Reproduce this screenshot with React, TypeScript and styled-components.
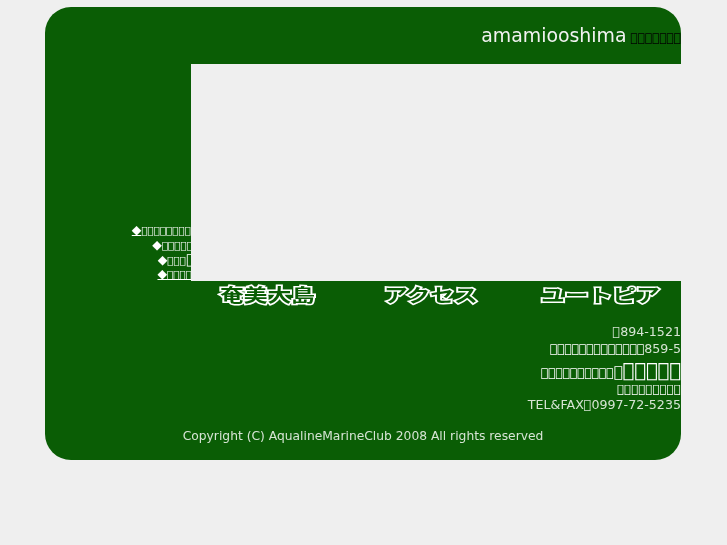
import React from "react";
import styled, { createGlobalStyle } from "styled-components";

const Global = createGlobalStyle`
  html, body { margin: 0; padding: 0; background: #efefef; }
  body { font-family: "DejaVu Sans", sans-serif; height: 545px; overflow: hidden; }
`;
const Card = styled.div`
  margin: 7px 0 0 45px;
  width: 636px;
  height: 453px;
  background: #0a5d05;
  border-radius: 26px;
  overflow: hidden;
  display: flex;
  flex-direction: column;
  filter: blur(0.3px);
`;
const Header = styled.header`
  height: 57px;
  flex: none;
  display: flex;
  justify-content: flex-end;
  align-items: baseline;
  white-space: nowrap;
  padding-top: 17px;
  box-sizing: border-box;
`;
const Title = styled.h1`
  margin: 0;
  font-size: 18.9px;
  font-weight: 400;
  color: #f2f2f2;
`;
const Sub = styled.span`
  font-size: 12px;
  color: #000;
  margin-left: 4px;
`;
const Middle = styled.div`
  display: flex;
  height: 217px;
  flex: none;
`;
const Nav = styled.nav`
  width: 146px;
  flex: none;
  box-sizing: border-box;
  padding-top: 159px;
  overflow: hidden;
  display: flex;
  flex-direction: column;
  align-items: flex-end;
  font-size: 10.3px;
  line-height: 14.8px;
  white-space: nowrap;
`;
const NavLink = styled.a<{ $under?: boolean; $pull: number }>`
  color: #fff;
  text-decoration: ${(p) => (p.$under ? "underline" : "none")};
  margin-right: ${(p) => p.$pull}px;
`;
const Diamond = styled.span`
  font-size: 12.5px;
  line-height: 1;
`;
const NavBig = styled.span`
  font-size: 13.5px;
  line-height: 1;
`;
const Hero = styled.div`
  flex: 1;
  background: #efefef;
`;
const Tabs = styled.div`
  height: 30px;
  flex: none;
  display: grid;
  grid-template-columns: 164px 157px 140px;
  padding-left: 175px;
  font-family: "Noto Sans CJK JP", sans-serif;
`;
const Tab = styled.span`
  display: block;
  font-size: 18px;
  font-weight: 700;
  line-height: 27px;
  color: #0a5d05;
  -webkit-text-stroke: 3px #fff;
  paint-order: stroke fill;
  white-space: nowrap;
  transform: scaleX(1.32);
  transform-origin: left center;
`;
const Footer = styled.footer`
  flex: 1;
  padding-top: 12px;
  display: flex;
  flex-direction: column;
  align-items: flex-end;
  font-size: 12.65px;
  color: #d6e4d4;
  white-space: nowrap;
`;
const Line = styled.div<{ $h: number; $top?: number }>`
  line-height: ${(p) => p.$h}px;
  margin-top: ${(p) => p.$top ?? 0}px;
`;
const Glyphs = styled.span<{ $size: number }>`
  font-size: ${(p) => p.$size}px;
  color: #fff;
`;
const Copy = styled.div`
  align-self: center;
  margin-top: 15px;
  font-size: 12.3px;
  color: #d6e4d4;
`;
const t = (n: number) => "\uE000".repeat(n);

export default function App() {
  return (
    <>
      <Global />
      <Card>
        <Header>
          <Title>amamiooshima</Title>
          <Sub>{t(7)}</Sub>
        </Header>
        <Middle>
          <Nav>
            <NavLink $under $pull={-6} href="#"><Diamond>◆</Diamond>{t(9)}</NavLink>
            <NavLink $pull={-8} href="#"><Diamond>◆</Diamond>{t(6)}</NavLink>
            <NavLink $pull={-3} href="#"><Diamond>◆</Diamond>{t(3)}<NavBig>{t(1)}</NavBig></NavLink>
            <NavLink $under $pull={-7} href="#"><Diamond>◆</Diamond>{t(5)}</NavLink>
          </Nav>
          <Hero />
        </Middle>
        <Tabs>
          <Tab>奄美大島</Tab>
          <Tab>アクセス</Tab>
          <Tab>ユートピア</Tab>
        </Tabs>
        <Footer>
          <Line $h={17}>{t(1)}894-1521</Line>
          <Line $h={17}><Glyphs $size={12.1}>{t(13)}</Glyphs>859-5</Line>
          <Line $h={20} $top={3}>
            <Glyphs $size={12.1}>{t(10)}</Glyphs>
            <Glyphs $size={15}>{t(1)}</Glyphs>
            <Glyphs $size={19.5}>{t(5)}</Glyphs>
          </Line>
          <Line $h={11}><Glyphs $size={11.8}>{t(9)}</Glyphs></Line>
          <Line $h={19}>TEL&amp;FAX{t(1)}0997-72-5235</Line>
          <Copy>Copyright (C) AqualineMarineClub 2008 All rights reserved</Copy>
        </Footer>
      </Card>
    </>
  );
}
